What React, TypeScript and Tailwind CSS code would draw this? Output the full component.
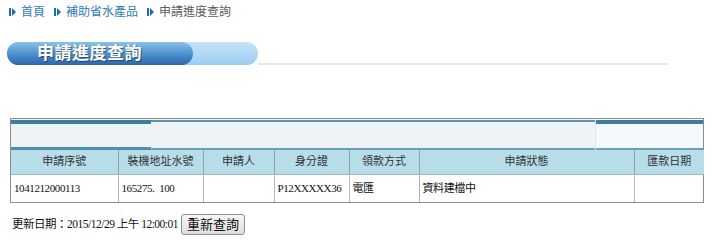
import React from 'react'

const cols = [
    { label: '申請序號', w: 107, value: '1041212000113' },
    { label: '裝機地址水號', w: 85, value: '165275.  100' },
    { label: '申請人', w: 71, value: '' },
    { label: '身分證', w: 75, value: 'P12XXXXX36' },
    { label: '領款方式', w: 70, value: '電匯' },
    { label: '申請狀態', w: 215, value: '資料建檔中' },
    { label: '匯款日期', w: 70, value: '' },
]

function Arrow({ first }: { first?: boolean }) {
    return (
        <svg width="7" height="10" viewBox="0 0 7 10" className={`shrink-0 ${first ? '' : 'ml-[4px]'}`}>
            <rect x="0" y="1" width="2" height="8" fill="#1b6fae" />
            <path d="M3 1 L7 5 L3 9 Z" fill="#1b6fae" />
        </svg>
    )
}

export default function App() {
    return (
        <div className="w-[720px] h-[241px] bg-white overflow-hidden font-['Liberation_Sans','Noto_Sans_CJK_TC',sans-serif]">
            {/* breadcrumb */}
            <div className="flex items-center gap-[5px] pl-[9px] pt-[3px] h-[20px] text-[12px] leading-none">
                <Arrow first />
                <span className="text-[#2f7db5]">首頁</span>
                <Arrow />
                <span className="text-[#2f7db5]">補助省水產品</span>
                <Arrow />
                <span className="text-[#5b5b5b]">申請進度查詢</span>
            </div>

            {/* title */}
            <div className="flex items-end mt-[22px] ml-[7px] w-[661px]">
                <div className="relative w-[251px] h-[23px] rounded-full bg-gradient-to-b from-[#c3e3f8] to-[#9dcdf0] shrink-0">
                    <div className="absolute left-0 top-0 w-[186px] h-[23px] rounded-full bg-gradient-to-b from-[#8cc2ea] via-[#4f92cf] to-[#2d68a8] flex items-center pl-[30px]">
                        <span className="text-white font-bold text-[17px] leading-none tracking-[0.5px] [text-shadow:1px_1px_1px_rgba(0,0,0,0.45)]">申請進度查詢</span>
                    </div>
                </div>
                <div className="flex-1 h-[2px] bg-[#e4e7f0]" />
            </div>

            {/* result frame */}
            <div className="mt-[53px] ml-[10px] w-[694px] border border-[#8c8c8c] bg-white">
                <div className="flex h-[31px] bg-[#eef3f8]">
                    <div className="w-[140px] flex flex-col">
                        <div className="h-[4px] bg-[#3b7f9c] mt-[1px]" />
                        <div className="flex-1" />
                        <div className="h-[3px] bg-[#4f8fab]" />
                    </div>
                    <div className="flex-1 flex flex-col">
                        <div className="h-[2px] bg-[#5c93ad] mt-[1px]" />
                        <div className="flex-1" />
                        <div className="h-[2px] bg-[#6aa0b8]" />
                    </div>
                    <div className="w-[108px] flex flex-col bg-[#f6f9fb] border-l border-[#dde6ec]">
                        <div className="h-[4px] bg-[#3b7f9c] mt-[1px]" />
                        <div className="flex-1" />
                        <div className="h-[2px] bg-[#6aa0b8]" />
                    </div>
                </div>
                <table className="border-collapse table-fixed w-[692px] text-[11px] leading-none">
                    <thead>
                        <tr className="h-[24px] bg-[#b7dde9]">
                            {cols.map((c, i) => (
                                <th
                                    key={c.label}
                                    style={{ width: c.w }}
                                    className={`font-normal text-[#333] text-center border-b border-[#9cb8c4] ${i < cols.length - 1 ? 'border-r border-r-[#8aa7b4]' : ''}`}
                                >
                                    {c.label}
                                </th>
                            ))}
                        </tr>
                    </thead>
                    <tbody>
                        <tr className="h-[28px]">
                            {cols.map((c, i) => (
                                <td
                                    key={c.label}
                                    className={`px-[3px] text-[#111] font-['Liberation_Serif','Noto_Sans_CJK_TC',serif] text-[11px] tracking-[-0.4px] whitespace-pre ${i < cols.length - 1 ? 'border-r border-[#b5b5b5]' : ''}`}
                                >
                                    {c.value}
                                </td>
                            ))}
                        </tr>
                    </tbody>
                </table>
            </div>

            {/* footer */}
            <div className="flex items-center mt-[11px] ml-[12px] gap-[3px]">
                <span className="text-[11.5px] text-[#111] font-['Liberation_Serif','Noto_Sans_CJK_TC',serif] tracking-[-0.5px]">
                    更新日期：2015/12/29 上午 12:00:01
                </span>
                <button className="h-[21px] w-[64px] rounded-[3px] border border-[#8e8e8e] bg-gradient-to-b from-[#f7f7f7] to-[#dcdcdc] text-[13px] text-[#111] leading-none">
                    重新查詢
                </button>
            </div>
        </div>
    )
}
